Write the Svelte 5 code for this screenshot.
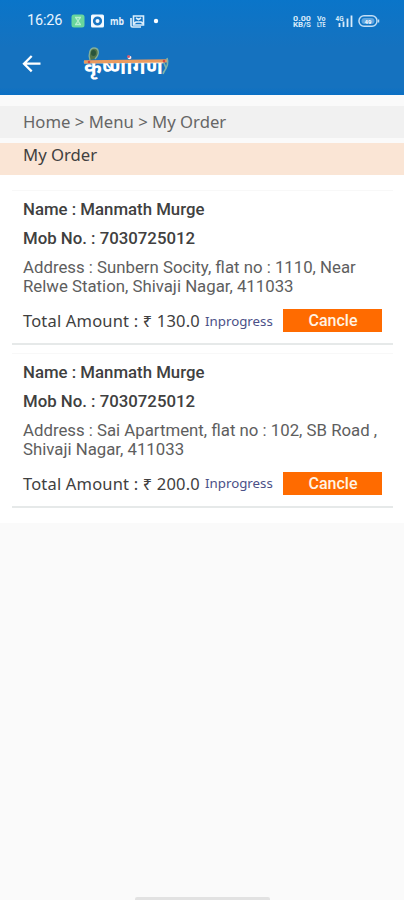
<script lang="ts">
	type Order = {
		id: number;
		name: string;
		mobile: string;
		address: string[];
		total: string;
		status: string;
	};

	let orders = $state<Order[]>([
		{
			id: 1,
			name: 'Manmath Murge',
			mobile: '7030725012',
			address: ['Sunbern Socity, flat no : 1110, Near', 'Relwe Station, Shivaji Nagar, 411033'],
			total: '130.0',
			status: 'Inprogress'
		},
		{
			id: 2,
			name: 'Manmath Murge',
			mobile: '7030725012',
			address: ['Sai Apartment, flat no : 102, SB Road ,', 'Shivaji Nagar, 411033'],
			total: '200.0',
			status: 'Inprogress'
		}
	]);

	function cancel(order: Order) {
		orders = orders.filter((o) => o.id !== order.id);
	}
</script>

<div class="screen">
	<header>
		<div class="status-bar">
			<span class="clock">16:26</span>
			<svg class="notifications" width="84" height="16" viewBox="0 0 84 16">
				<rect x="0.5" y="1.5" width="13" height="13" rx="2.5" fill="#69d69c" />
				<path d="M4 4.5h6M4 11.5h6M5 5l4 6M9 5l-4 6" stroke="#b5f0cf" stroke-width="1.3" />
				<rect x="20" y="1.5" width="13" height="13" rx="1.5" fill="#f4faff" />
				<circle cx="26.5" cy="8" r="3.3" fill="none" stroke="#1976c4" stroke-width="2.6" />
				<text x="39" y="11.5" class="mb" textLength="14" lengthAdjust="spacingAndGlyphs">mb</text>
				<path
					d="M60 5v7.5q0 1.5 1.5 1.5H70M62.5 3h10v9h-10zM65 5l2.5 1.5L70 5M63 10.5l2-1.5h5l2 1.5"
					fill="none"
					stroke="#dceefb"
					stroke-width="1.6"
				/>
				<circle cx="85" cy="8" r="2.2" fill="#fff" />
			</svg>
			<svg class="system" width="88" height="16" viewBox="0 0 88 16">
				<text x="1" y="7.5" class="tiny" textLength="18" lengthAdjust="spacingAndGlyphs">0.00</text>
				<text x="1" y="14" class="tiny" textLength="18" lengthAdjust="spacingAndGlyphs">KB/S</text>
				<text x="25" y="7.5" class="tiny" textLength="8.5" lengthAdjust="spacingAndGlyphs">Vo</text>
				<text x="25" y="14" class="tiny" textLength="8.5" lengthAdjust="spacingAndGlyphs">LTE</text>
				<text x="43.5" y="8" class="tiny" textLength="8" lengthAdjust="spacingAndGlyphs">4G</text>
				<path d="M47.5 10v4M51.5 8.5V14M55.5 5.5V14M59.5 2.5V14" stroke="#d9ebfa" stroke-width="1.8" />
				<rect x="67" y="2.7" width="18" height="10.6" rx="5" fill="none" stroke="#c3def5" stroke-width="1.5" />
				<rect x="69.5" y="5" width="13" height="6" rx="3" fill="#5fa5df" />
				<text x="72.5" y="10.5" class="level" textLength="7">49</text>
				<path d="M86.6 6.5v3" stroke="#c3def5" stroke-width="1.3" />
			</svg>
		</div>

		<div class="app-bar">
			<button class="back" aria-label="Back">
				<svg width="20" height="20" viewBox="0 0 20 20">
					<path d="M18.5 9.7H2.5M9.7 2L2 9.7l7.7 7.7" fill="none" stroke="#fff" stroke-width="2.3" />
				</svg>
			</button>
			<svg class="logo" width="90" height="38" viewBox="0 0 90 38">
				<text x="1" y="28.5" class="brand" textLength="79" lengthAdjust="spacingAndGlyphs">कृष्णांगण</text>
				<path d="M1 16.8L85 15.8" stroke="#e99b5f" stroke-width="3.2" />
				<path d="M7 15C5 9 7 3 11 3c5 0 6 6 1 11" fill="#527449" stroke="#84b09a" stroke-width="1.3" />
				<ellipse cx="10.5" cy="8" rx="2.5" ry="3" fill="#28543b" />
				<circle cx="6" cy="17" r="1.3" fill="#d34b45" />
				<circle cx="45.5" cy="11.5" r="1.5" fill="#d45a6c" />
				<circle cx="81" cy="16" r="1.3" fill="#d34b45" />
				<path d="M84 13c2 5 0 10-4 15M81 18l2 5-3 6" fill="none" stroke="#7fb3a9" stroke-width="1.6" />
			</svg>
		</div>
	</header>

	<nav>
		<span class="crumbs">Home &gt; Menu &gt; My Order</span>
	</nav>

	<main>
		<h1><span class="heading">My Order</span></h1>

		<ul>
			{#each orders as order (order.id)}
				<li>
					<p class="name"><span>Name : {order.name}</span></p>
					<p class="mobile"><span>Mob No. : {order.mobile}</span></p>
					<p class="address">
						Address : {order.address[0]}<br />{order.address[1]}
					</p>
					<div class="summary">
						<span class="total">Total Amount : ₹ {order.total}</span>
						<span class="state">{order.status}</span>
						<button class="cancel" onclick={() => cancel(order)}>Cancle</button>
					</div>
				</li>
			{/each}
		</ul>
	</main>

	<div class="home-indicator"></div>
</div>

<style>
	:global(body) {
		margin: 0;
		background: #fafafa;
	}

	.screen {
		display: flex;
		flex-direction: column;
		width: 404px;
		height: 900px;
		overflow: hidden;
		background: #fafafa;
		font-family: 'Noto Sans', 'Open Sans', sans-serif;
		color: #404040;
	}

	header {
		height: 95px;
		flex-shrink: 0;
		background: linear-gradient(#0a75c9, #1572bf 50%, #1572bf 92%, #0b70c4);
	}

	.status-bar {
		display: flex;
		align-items: center;
		height: 41px;
		padding: 0 24px 0 27px;
	}

	.clock {
		width: 44px;
		padding-top: 2px;
		font: 400 14.5px/1 Roboto, sans-serif;
		letter-spacing: -0.2px;
		color: #e8f4ff;
	}

	.notifications {
		display: block;
		width: 84px;
		margin-right: auto;
		overflow: visible;
	}

	.mb {
		font: 700 10px 'Open Sans', sans-serif;
		fill: #e4f1fc;
	}

	.tiny {
		font: 700 7px Roboto, sans-serif;
		fill: #d9ebfa;
	}

	.level {
		font: 700 6px Roboto, sans-serif;
		fill: #fff;
	}

	.app-bar {
		display: flex;
		align-items: center;
		height: 46px;
		padding-left: 22px;
	}

	button {
		padding: 0;
		border: 0;
		cursor: pointer;
	}

	.back {
		width: 20px;
		height: 20px;
		background: none;
	}

	.back svg,
	.logo {
		display: block;
	}

	.logo {
		margin-left: 41px;
	}

	.brand {
		font: 700 20px 'Noto Sans Devanagari', 'Noto Sans', sans-serif;
		fill: #fff;
	}

	nav {
		display: flex;
		align-items: center;
		box-sizing: border-box;
		height: 32px;
		margin: 11px 0 5px;
		padding: 0 0 1px 23px;
		flex-shrink: 0;
		background: #f1f1f1;
	}

	.crumbs {
		font-size: 16.7px;
		color: #666;
	}

	main {
		height: 380px;
		flex-shrink: 0;
		background: #fff;
	}

	h1 {
		height: 32px;
		margin: 0 0 15px;
		padding-left: 23px;
		background: #fae5d5;
		font-size: 16.7px;
		font-weight: 400;
		line-height: 24px;
	}

	ul {
		margin: 0;
		padding: 0 11px 0 12px;
		list-style: none;
	}

	li {
		box-sizing: border-box;
		height: 155px;
		margin-bottom: 7.5px;
		padding: 9px 11px 0;
		border-top: 1px solid #f8f8f8;
		border-bottom: 2px solid #e6e9e9;
	}

	p {
		margin: 0;
		font-family: Roboto, sans-serif;
		font-size: 16.8px;
		white-space: nowrap;
	}

	.name,
	.mobile {
		height: 29px;
		font-weight: 500;
		line-height: 19px;
	}

	.address {
		height: 51px;
		line-height: 19px;
		color: #5e5e5e;
	}

	.summary {
		display: flex;
		align-items: center;
		height: 23px;
		white-space: nowrap;
	}

	.total {
		width: 182px;
		font-size: 16.5px;
		letter-spacing: 0.18px;
	}

	.state {
		width: 78px;
		font-size: 13.3px;
		color: #4b5087;
	}

	.cancel {
		width: 99px;
		height: 23px;
		flex-shrink: 0;
		background: #ff6b00;
		font: 500 16px/24px Roboto, sans-serif;
		text-indent: 1px;
		color: #fff3e4;
	}

	.home-indicator {
		width: 135px;
		height: 3px;
		margin: auto auto 0;
		border-radius: 2px 2px 0 0;
		background: #e2e2e2;
	}
</style>
